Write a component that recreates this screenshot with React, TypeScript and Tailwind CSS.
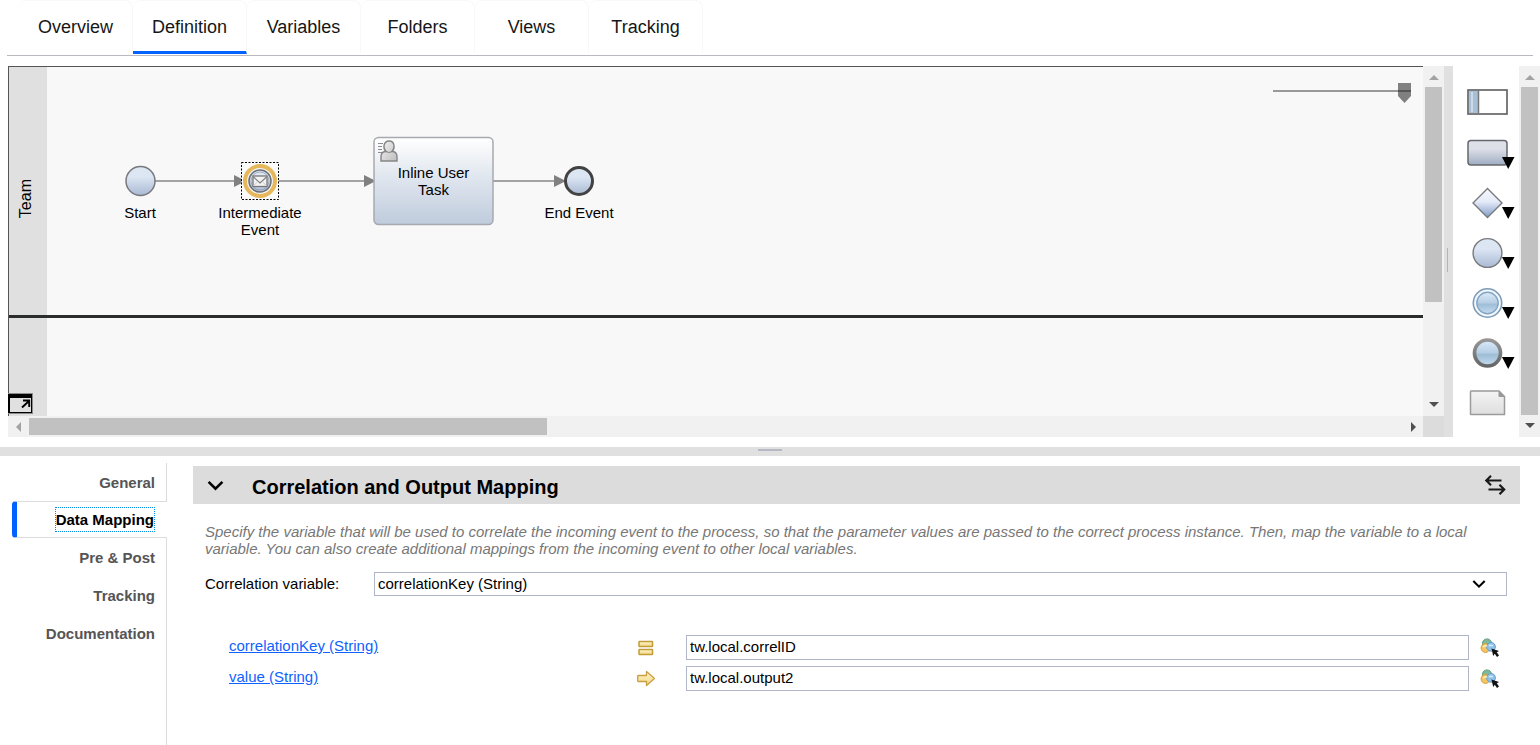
import { useState } from "react";
import type { ReactNode } from "react";

const TABS = ["Overview", "Definition", "Variables", "Folders", "Views", "Tracking"];
const SECTIONS = ["General", "Data Mapping", "Pre & Post", "Tracking", "Documentation"];

function Gradients() {
  return (
    <svg width="0" height="0" className="absolute" aria-hidden="true">
      <defs>
        <linearGradient id="ball" x1="0" y1="0" x2="0" y2="1">
          <stop offset="0" stopColor="#dce7f4" />
          <stop offset="0.35" stopColor="#dce6f3" />
          <stop offset="1" stopColor="#a9b9d3" />
        </linearGradient>
        <linearGradient id="task" x1="0" y1="0" x2="0" y2="1">
          <stop offset="0" stopColor="#ffffff" />
          <stop offset="0.5" stopColor="#dde4ed" />
          <stop offset="1" stopColor="#bfcbdc" />
        </linearGradient>
        <linearGradient id="box" x1="0" y1="0" x2="0" y2="1">
          <stop offset="0" stopColor="#dfe1ea" />
          <stop offset="0.35" stopColor="#dddfe8" />
          <stop offset="1" stopColor="#9dadc1" />
        </linearGradient>
        <linearGradient id="gem" x1="0" y1="0" x2="0" y2="1">
          <stop offset="0" stopColor="#f6f8fe" />
          <stop offset="0.45" stopColor="#e6ebf8" />
          <stop offset="1" stopColor="#7f9bca" />
        </linearGradient>
        <linearGradient id="glass" x1="0" y1="0" x2="0" y2="1">
          <stop offset="0" stopColor="#dcebfb" />
          <stop offset="0.5" stopColor="#b5cde3" />
          <stop offset="0.55" stopColor="#9fbdd6" />
          <stop offset="1" stopColor="#c3dcf2" />
        </linearGradient>
        <linearGradient id="rim" x1="0" y1="0" x2="0" y2="1">
          <stop offset="0" stopColor="#969696" />
          <stop offset="1" stopColor="#666666" />
        </linearGradient>
        <linearGradient id="note" x1="0" y1="0" x2="0" y2="1">
          <stop offset="0" stopColor="#f4f4f4" />
          <stop offset="1" stopColor="#dedede" />
        </linearGradient>
        <linearGradient id="gold" x1="0" y1="0" x2="0" y2="1">
          <stop offset="0" stopColor="#fdf6cf" />
          <stop offset="1" stopColor="#f2d680" />
        </linearGradient>
        <linearGradient id="person" x1="0" y1="0" x2="1" y2="1">
          <stop offset="0" stopColor="#f4f4f4" />
          <stop offset="1" stopColor="#bdbdbd" />
        </linearGradient>
      </defs>
    </svg>
  );
}

function Arrow({ dir, dim = false }: { dir: "up" | "down" | "left" | "right"; dim?: boolean }) {
  const paths = {
    up: "M0 8 L5 3 L10 8Z",
    down: "M0 2 L10 2 L5 7Z",
    left: "M7 0 L2 5 L7 10Z",
    right: "M3 0 L8 5 L3 10Z",
  };
  return (
    <svg width="10" height="10" viewBox="0 0 10 10">
      <path d={paths[dir]} fill={dim ? "#a3a3a3" : "#505050"} />
    </svg>
  );
}

function VerticalBar({ thumb }: { thumb: string }) {
  return (
    <div className="flex w-[21px] shrink-0 flex-col items-center bg-[#f1f1f1]">
      <button aria-label="Scroll up" className="flex h-[21px] w-full shrink-0 items-center justify-center">
        <Arrow dir="up" dim />
      </button>
      <div className="flex w-full flex-1 justify-center">
        <div className={`w-[17px] bg-[#c1c1c1] ${thumb}`} />
      </div>
      <button aria-label="Scroll down" className="flex h-[22px] w-full shrink-0 items-center justify-center">
        <Arrow dir="down" />
      </button>
    </div>
  );
}

function Node({ className, label, children }: { className: string; label: string; children: ReactNode }) {
  return (
    <div className={`absolute flex flex-col items-center text-center text-[15px] leading-[17px] ${className}`}>
      {children}
      <span>{label}</span>
    </div>
  );
}

function Flow() {
  return (
    <>
      <svg className="absolute top-[106px] left-0" width="600" height="16" viewBox="0 0 600 16">
        <g stroke="#a3a3a3" strokeWidth="2">
          <path d="M108 8H190M230 8H320M446 8H510" />
        </g>
        <g fill="#808080">
          <path d="M187 2L199 8L187 14Z" />
          <path d="M317 2L329 8L317 14Z" />
          <path d="M507 2L519 8L507 14Z" />
        </g>
      </svg>
      <Node className="top-[94px] left-[63px] w-[60px] gap-[3px]" label="Start">
        <svg width="40" height="40" viewBox="0 0 40 40">
          <circle cx="20.500" cy="20" r="14.500" fill="url(#ball)" stroke="#77797d" strokeWidth="1.500" />
        </svg>
      </Node>
      <Node className="top-[94px] left-[163px] w-[100px] gap-[3px]" label="Intermediate Event">
        <svg width="40" height="40" viewBox="0 0 40 40">
          <rect x="1.500" y="1.500" width="37" height="37" fill="#fcfcfc" stroke="#000" strokeDasharray="2 1.500" />
          <circle cx="20" cy="20" r="15" fill="#f3f3f3" stroke="#e7b75c" strokeWidth="4" />
          <circle cx="20" cy="20" r="11" fill="url(#ball)" stroke="#6c6f75" strokeWidth="1.500" />
          <circle cx="20" cy="20" r="9" fill="none" stroke="#8d949f" strokeWidth="0.700" />
          <rect x="13" y="15" width="14" height="10.500" fill="#f2f2f2" stroke="#777" strokeWidth="1.300" />
          <path d="M13.500 16L20 22L26.500 16" fill="none" stroke="#808080" strokeWidth="1.200" />
          <path d="M13.500 25L17.500 20.500M26.500 25L22.500 20.500" fill="none" stroke="#d0d0d0" />
        </svg>
      </Node>
      <div className="absolute top-[69px] left-[326px] h-[90px] w-[121px]">
        <svg className="absolute inset-0" width="121" height="90" viewBox="0 0 121 90">
          <rect x="1" y="1.500" width="119" height="87" rx="4.500" fill="url(#task)" stroke="#a6a9af" strokeWidth="1.500" />
          <path d="M5 7.500H10M5 10.500H9M5 13.500H9M5 16.500H9" stroke="#8d8d8d" />
          <path d="M8 25V20Q8.500 15.500 13 15.500Q10.500 13 11 9.500Q12 5 16 5Q20.500 5 21 9.500Q21.500 13 19 15.500Q23.500 15.500 24 20V25Z" fill="url(#person)" stroke="#858585" strokeWidth="1.400" />
          <path d="M13 15.500Q16 17.500 19 15.500" stroke="#858585" fill="none" />
        </svg>
        <span className="relative flex h-full items-center justify-center px-4 text-center text-[15px] leading-[17px]">
          Inline User Task
        </span>
      </div>
      <Node className="top-[94px] left-[482px] w-[100px] gap-[3px]" label="End Event">
        <svg width="40" height="40" viewBox="0 0 40 40">
          <circle cx="20" cy="20" r="13.500" fill="url(#ball)" stroke="#424242" strokeWidth="3" />
        </svg>
      </Node>
    </>
  );
}

function Diagram() {
  return (
    <div className="relative flex flex-1 flex-col border-t border-l border-[#555] bg-[#f8f8f8]">
      <div className="flex h-[251px] border-b-[3px] border-[#2b2d2c]">
        <div className="flex w-[38px] items-center justify-center bg-[#e0e0e0] pt-4 pr-1">
          <span className="rotate-180 text-base leading-5 [writing-mode:vertical-rl]">Team</span>
        </div>
        <div className="relative flex-1">
          <Flow />
        </div>
      </div>
      <div className="w-[38px] flex-1 bg-[#e0e0e0]" />
      <input
        type="range"
        aria-label="Zoom"
        defaultValue={100}
        className="absolute top-4 right-3 h-5 w-[138px] appearance-none bg-transparent [&::-webkit-slider-runnable-track]:h-5 [&::-webkit-slider-runnable-track]:bg-[linear-gradient(transparent_7px,#999_7px,#999_9px,transparent_9px)] [&::-webkit-slider-thumb]:h-5 [&::-webkit-slider-thumb]:w-[13px] [&::-webkit-slider-thumb]:appearance-none [&::-webkit-slider-thumb]:bg-[linear-gradient(#808080_7px,#555_7px,#555_9px,#808080_9px)] [&::-webkit-slider-thumb]:[clip-path:polygon(0_0,100%_0,100%_65%,50%_100%,0_65%)]"
      />
      <button aria-label="Open overview" className="absolute bottom-0.5 -left-px">
        <svg className="block" width="25" height="21" viewBox="0 0 25 21">
          <rect width="25" height="21" fill="#8b8b8b" />
          <rect y="1" width="24" height="19" fill="#000" />
          <rect x="2" y="5" width="21" height="14" fill="#e0e0e0" />
          <path d="M14 14.500L21 8M15 7.500H21.200V14" stroke="#000" strokeWidth="1.900" fill="none" />
        </svg>
      </button>
    </div>
  );
}

function PaletteItem({ label, menu = true, children }: { label: string; menu?: boolean; children: ReactNode }) {
  return (
    <button aria-label={label} className="block h-[50px]">
      <svg className="block" width="50" height="50" viewBox="0 0 50 50">
        {children}
        {menu && <path d="M37 30H49.500L43.200 42Z" fill="#000" />}
      </svg>
    </button>
  );
}

function Palette() {
  return (
    <div className="flex flex-1 flex-col items-center overflow-hidden pt-[11px] pl-2">
      <PaletteItem label="Lane" menu={false}>
        <rect x="3" y="13" width="39" height="24" fill="#fff" stroke="#666" strokeWidth="1.700" />
        <rect x="4" y="14" width="9" height="22" fill="#a9bfd6" />
        <path d="M7 15V35" stroke="#c9daea" strokeWidth="2" />
        <path d="M13.500 14V36" stroke="#777" strokeWidth="1.500" />
      </PaletteItem>
      <PaletteItem label="Activity">
        <rect x="3" y="13.500" width="39" height="24.500" rx="3" fill="url(#box)" stroke="#64676b" strokeWidth="1.500" />
      </PaletteItem>
      <PaletteItem label="Gateway">
        <path d="M22.500 11.500L37 26L22.500 40.500L8 26Z" fill="url(#gem)" stroke="#77797d" strokeWidth="1.400" />
      </PaletteItem>
      <PaletteItem label="Start event">
        <circle cx="22.500" cy="26" r="14.400" fill="url(#ball)" stroke="#77797d" strokeWidth="1.400" />
      </PaletteItem>
      <PaletteItem label="Intermediate event">
        <circle cx="22.500" cy="26" r="14.200" fill="#f3f8fd" stroke="#7b9bb8" strokeWidth="1.600" />
        <circle cx="22.500" cy="26" r="10.700" fill="url(#glass)" stroke="#84a6c4" strokeWidth="1.400" />
      </PaletteItem>
      <PaletteItem label="End event">
        <circle cx="22.500" cy="26" r="13" fill="url(#glass)" stroke="url(#rim)" strokeWidth="3.700" />
      </PaletteItem>
      <PaletteItem label="Note" menu={false}>
        <path d="M6 14H34L39.500 19.500V37.500H6Q5.500 37.500 5.500 37V14.500Z" fill="url(#note)" stroke="#9b9b9b" strokeWidth="1.500" />
        <path d="M34 14.500V19.500H39.500Z" fill="#999" stroke="#999" />
      </PaletteItem>
    </div>
  );
}

function Chevron({ className = "", size }: { className?: string; size: number }) {
  return (
    <svg className={className} width={size} height={size} viewBox="0 0 16 16" fill="none" stroke="#000" strokeWidth="2.400">
      <path d="M1.500 4.500L8 11L14.500 4.500" />
    </svg>
  );
}

function PickVariable() {
  return (
    <svg className="block" width="20" height="20" viewBox="0 0 20 20">
      <circle cx="7" cy="5.500" r="4.600" fill="#80b99a" stroke="#61a07f" />
      <circle cx="5.500" cy="10" r="4.400" fill="#f5c565" stroke="#d59b32" />
      <circle cx="11" cy="8.800" r="4.400" fill="#8fc1e8" stroke="#619fcf" />
      <path d="M3 9Q5 7 7 8" stroke="#fff1c0" strokeWidth="1.500" fill="none" />
      <path d="M9 8Q11 6.500 13 8" stroke="#d5edfc" strokeWidth="1.300" fill="none" />
      <path d="M11.500 10.500L19 13L16.800 14.200L19 17.500L17 19L14.800 15.800L13.200 18Z" fill="#111" />
    </svg>
  );
}

function EqualsIcon() {
  return (
    <svg width="18" height="18" viewBox="0 0 18 18" fill="url(#gold)" stroke="#c29c38" strokeWidth="1.500">
      <rect x="2" y="2.500" width="13.500" height="5" rx="0.500" />
      <rect x="2" y="10.500" width="13.500" height="5" rx="0.500" />
    </svg>
  );
}

function OutputIcon() {
  return (
    <svg width="18" height="18" viewBox="0 0 18 18" fill="url(#gold)" stroke="#c99f42" strokeWidth="1.300" strokeLinejoin="round">
      <path d="M1 5.500H9.500V1.500L17.500 8.500L9.500 15.500V11.500H1L0.700 10.500V6.500Z" />
    </svg>
  );
}

function MappingRow({ name, value, icon }: { name: string; value: string; icon: ReactNode }) {
  const [text, setText] = useState(value);
  return (
    <div className="flex h-[25px] items-center">
      <div className="w-[408px] shrink-0 pb-1">
        <a href="#variable" className="text-[#0f62fe] underline">{name}</a>
      </div>
      <div className="w-[49px] shrink-0">{icon}</div>
      <input
        aria-label={`${name} mapping`}
        value={text}
        onChange={(e) => setText(e.target.value)}
        className="h-[25px] min-w-0 flex-1 border border-[#b0b5c8] bg-white px-[3px] pb-0.5"
      />
      <button aria-label={`Select variable for ${name}`} className="ml-[11px] shrink-0">
        <PickVariable />
      </button>
    </div>
  );
}

export default function App() {
  const [tab, setTab] = useState("Definition");
  const [section, setSection] = useState("Data Mapping");
  return (
    <div className="flex min-h-screen flex-col bg-white font-['Liberation_Sans',Arial,sans-serif] text-[15px] leading-[17px] text-black">
      <Gradients />
      <nav className="mx-[7px] flex h-14 shrink-0 border-b border-[#b9b9c0] pl-3">
        {TABS.map((t) => (
          <button
            key={t}
            onClick={() => setTab(t)}
            className={`h-[54px] w-[114px] rounded-t-lg border-t border-r border-[#f8f8f8] border-b-[3px] pt-0.5 text-lg text-[#161616] ${
              t === tab ? "border-b-[#0062ff]" : "border-b-transparent"
            }`}
          >
            {t}
          </button>
        ))}
      </nav>

      <div className="mt-2.5 flex h-[371px] shrink-0 pl-2">
        <div className="flex min-w-0 flex-1 flex-col">
          <div className="flex flex-1">
            <Diagram />
            <VerticalBar thumb="h-[215px]" />
          </div>
          <div className="flex h-[21px] bg-[#f1f1f1]">
            <button aria-label="Scroll left" className="flex w-[21px] items-center justify-center">
              <Arrow dir="left" dim />
            </button>
            <div className="flex flex-1 items-center">
              <div className="h-[17px] w-[518px] bg-[#c1c1c1]" />
            </div>
            <button aria-label="Scroll right" className="flex w-[21px] items-center justify-center">
              <Arrow dir="right" />
            </button>
            <div className="w-[21px] bg-[#dcdcdc]" />
          </div>
        </div>
        <div className="flex w-[9px] shrink-0 items-center bg-[#e0e0e0] pt-4 pl-[3px]">
          <div className="h-6 w-px bg-[#b0b3c4]" />
        </div>
        <div className="flex w-[87px] shrink-0">
          <Palette />
          <VerticalBar thumb="h-full" />
        </div>
      </div>

      <div className="mt-2.5 flex h-[9px] shrink-0 items-center justify-center bg-[#e0e0e0] pb-[3px]">
        <div className="h-0.5 w-6 bg-[#b6b8c6]" />
      </div>

      <div className="flex flex-1">
        <nav className="flex w-[167px] shrink-0 flex-col pt-[7px] pl-3">
          {SECTIONS.map((s) => (
            <button
              key={s}
              onClick={() => setSection(s)}
              className={`flex shrink-0 items-center justify-end font-bold ${
                s === section
                  ? "h-[37px] rounded-l-sm border-y border-l-[5px] border-y-[#dcdcdc] border-l-[#0062ff] pr-[13px] text-black"
                  : "h-[38px] border-r border-[#dcdcdc] pr-[11px] text-[#555]"
              }`}
            >
              {s === section ? (
                <span className="py-[3px] outline-1 outline-[#0090e8] outline-dotted">{s}</span>
              ) : (
                s
              )}
            </button>
          ))}
          <div className="flex-1 border-r border-[#dcdcdc]" />
        </nav>

        <main className="min-w-0 flex-1 pt-2.5 pr-5 pl-[26px]">
          <header className="flex h-[38px] items-center bg-[#dcdcdc] pr-3.5 pl-3.5">
            <button aria-label="Collapse section">
              <Chevron size={17} className="block" />
            </button>
            <h2 className="ml-7 flex-1 pt-1 text-xl leading-6 font-bold">Correlation and Output Mapping</h2>
            <button aria-label="Swap columns">
              <svg className="block" width="22" height="22" viewBox="0 0 22 22" fill="none" stroke="#1a1a1a" strokeWidth="2.200">
                <path d="M17.500 6.500H2.500M7 1.800L2.300 6.500L7 11.200M4.500 15.500H20M15.500 10.800L20.200 15.500L15.500 20.200" />
              </svg>
            </button>
          </header>
          <div className="px-3 pt-[19px]">
            <p className="text-[#777] italic">
              Specify the variable that will be used to correlate the incoming event to the process, so that the
              parameter values are passed to the correct process instance. Then, map the variable to a local
              variable. You can also create additional mappings from the incoming event to other local variables.
            </p>
            <div className="mt-[15px] flex items-center">
              <label htmlFor="correlation" className="w-[169px] shrink-0 pb-0.5">Correlation variable:</label>
              <div className="relative min-w-0 flex-1 pr-px">
                <select
                  id="correlation"
                  className="block h-6 w-full appearance-none border border-[#b0b5c8] bg-white pr-10 pb-0.5 pl-[3px]"
                >
                  <option>correlationKey (String)</option>
                </select>
                <Chevron size={14} className="pointer-events-none absolute top-[5px] right-[22px]" />
              </div>
            </div>
            <div className="mt-[39px] flex flex-col gap-1.5 pr-2 pl-6">
              <MappingRow name="correlationKey (String)" value="tw.local.correlID" icon={<EqualsIcon />} />
              <MappingRow name="value (String)" value="tw.local.output2" icon={<OutputIcon />} />
            </div>
          </div>
        </main>
      </div>
    </div>
  );
}
